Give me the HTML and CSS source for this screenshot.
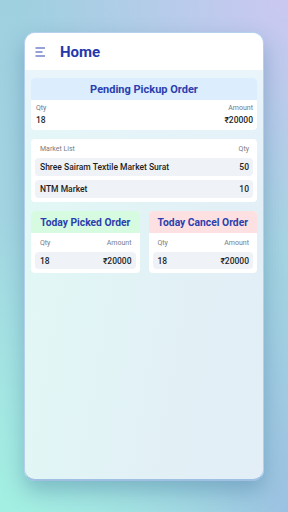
FILE: index.html
```html
<!DOCTYPE html>
<html>
<head>
<meta charset="utf-8">
<link rel="stylesheet" href="styles.css">
</head>
<body>
<div class="phone">
  <header class="topbar">
    <svg class="menu" width="11" height="10" viewBox="0 0 11 10">
      <path d="M0.5 1h9.5M0.5 5h7M0.5 9h9.5" stroke="#2f44b3" stroke-width="1.1" fill="none"/>
    </svg>
    <h1 class="title">Home</h1>
  </header>
  <main class="content">
    <section class="card">
      <div class="card-head blue">Pending Pickup Order</div>
      <div class="kv">
        <div class="kv-labels"><span>Qty</span><span>Amount</span></div>
        <div class="kv-values"><span>18</span><span>₹20000</span></div>
      </div>
    </section>
    <section class="card list">
      <div class="list-head"><span>Market List</span><span>Qty</span></div>
      <div class="row"><span>Shree Sairam Textile Market Surat</span><span>50</span></div>
      <div class="row"><span>NTM Market</span><span>10</span></div>
    </section>
    <div class="pair">
      <section class="card small">
        <div class="card-head green">Today Picked Order</div>
        <div class="list-head"><span>Qty</span><span>Amount</span></div>
        <div class="row"><span>18</span><span>₹20000</span></div>
      </section>
      <section class="card small">
        <div class="card-head red">Today Cancel Order</div>
        <div class="list-head"><span>Qty</span><span>Amount</span></div>
        <div class="row"><span>18</span><span>₹20000</span></div>
      </section>
    </div>
  </main>
</div>
</body>
</html>
```
FILE: styles.css
```css
* { box-sizing: border-box; }
html, body { margin: 0; padding: 0; }
body {
  width: 288px;
  height: 512px;
  overflow: hidden;
  font-family: Roboto, "Noto Sans", sans-serif;
  background:
    radial-gradient(circle at 100% 0%, #cbc8f2 0%, rgba(203,200,242,0) 45%),
    radial-gradient(circle at 0% 100%, #a3f0e2 0%, rgba(163,240,226,0) 50%),
    radial-gradient(circle at 100% 100%, #9cc0e2 0%, rgba(156,192,226,0) 45%),
    linear-gradient(180deg, #9fd0e0 0%, #a8dbe4 100%);
  padding-top: 32px;
}
.phone {
  margin-left: 24px;
  width: 240px;
  height: 449px;
  border-radius: 11px;
  overflow: hidden;
  background: linear-gradient(100deg, #e1f9f5 0%, #e2f1f6 60%, #e3eef7 100%);
  border: 1px solid #b4d0ec;
  border-bottom: 2px solid #9fc0e3;
  box-shadow: 0 10px 22px rgba(60, 110, 150, 0.4);
  display: flex;
  flex-direction: column;
}
.topbar {
  height: 37px;
  background: #fff;
  display: flex;
  align-items: center;
  padding-left: 10px;
  flex-shrink: 0;
}
.menu { display: block; margin-top: 1px; }
.title {
  margin: 0 0 0 14px;
  font-size: 15px;
  font-weight: 700;
  color: #2438ac;
}
.content {
  padding: 8px 6px 0 6px;
  display: flex;
  flex-direction: column;
  gap: 9px;
  background: linear-gradient(180deg, #e9f4fb 0%, rgba(233,244,251,0) 60%);
}
.card {
  background: #fff;
  border-radius: 4px;
  overflow: hidden;
}
.card-head {
  height: 22px;
  display: flex;
  align-items: center;
  justify-content: center;
  font-size: 11px;
  font-weight: 700;
  color: #2b3fae;
}
.small .card-head { font-size: 10.3px; }
.card-head.blue { background: #dcedfd; }
.card-head.green { background: #d6fbe1; }
.card-head.red { background: #fde0e2; }
.kv { padding: 3px 4px 4px 5px; }
.kv-labels, .kv-values, .list-head, .row {
  display: flex;
  justify-content: space-between;
  align-items: center;
}
.kv-labels { font-size: 7px; color: #74777c; height: 10px; }
.kv-values { font-size: 8.5px; color: #1d1f24; font-weight: 500; height: 13px; }
.list { padding: 4px; display: flex; flex-direction: column; gap: 4px; }
.list .list-head { height: 11px; padding: 0 4px 0 5px; }
.list-head { font-size: 7px; color: #797c82; }
.row {
  background: #eff2f7;
  border-radius: 4px;
  height: 18px;
  padding: 0 4px 0 5px;
  font-size: 8.5px;
  color: #1d1f24;
  font-weight: 500;
}
.pair { display: flex; gap: 9px; }
.small { flex: 1; padding-bottom: 4px; }
.small .list-head { height: 19px; padding: 0 8px 0 9px; }
.small .row { margin: 0 4px; height: 17px; }
```
